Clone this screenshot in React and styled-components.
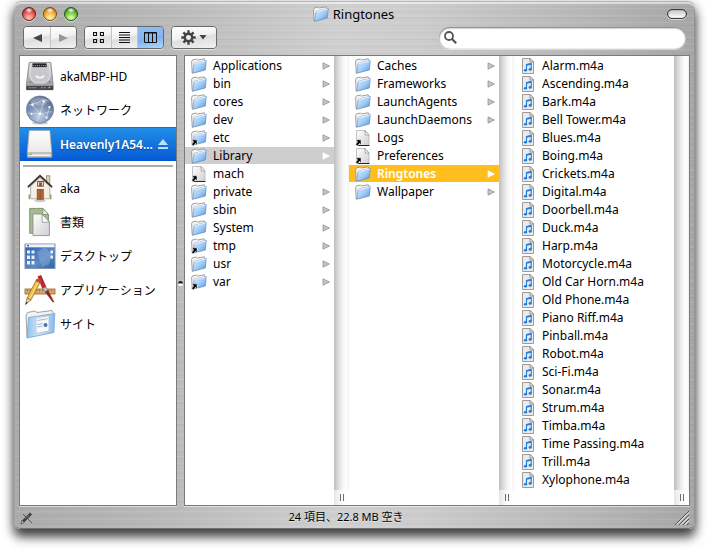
import React, { useState } from 'react';
import styled, { createGlobalStyle, css } from 'styled-components';

const GlobalStyle = createGlobalStyle`
  *{
    box-sizing: border-box;
  }
  body{
    margin: 0;
    background: #FFFFFF;
    color: #000000;
    font-family: "Noto Sans", "Noto Sans CJK JP", sans-serif;
    font-size: 12px;
    line-height: 16px;
  }
  ul{
    list-style: none;
    margin: 0;
    padding: 0;
  }
  button, input{
    font: inherit;
    color: inherit;
    margin: 0;
    padding: 0;
    border: none;
    background: none;
  }
  svg{
    display: block;
    flex: none;
  }
`

const Page = styled.div`
  padding: 1px 14px 24px;
  overflow: hidden;
`
const Window = styled.main`
  padding: 0 5px;
  border-radius: 7px 7px 6px 6px;
  background:
    repeating-linear-gradient(180deg, rgba(255,255,255,0.08) 0 1px, transparent 1px 3px, rgba(0,0,0,0.02) 3px 4px, transparent 4px 7px),
    repeating-linear-gradient(180deg, transparent 0 4px, rgba(255,255,255,0.08) 4px 5px, rgba(0,0,0,0.02) 5px 6px, transparent 6px 11px),
    linear-gradient(90deg, #ABABAB 0%, #B8B8B8 20%, #D0D0D0 48%, #CCCCCC 60%, #B6B6B6 85%, #A6A6A6 100%);
  box-shadow:
    inset 0 1px 0 #B4B4B4,
    inset 0 3px 1px rgba(255,255,255,0.6),
    inset 1px 0 0 #A2A2A2,
    inset -1px 0 0 #8C8C8C,
    inset 0 -1px 0 #707070,
    0 8px 11px rgba(0,0,0,0.7),
    0 2px 12px rgba(0,0,0,0.25);
`
const TitleBar = styled.header`
  display: grid;
  grid-template-columns: 1fr auto 1fr;
  align-items: center;
  height: 25px;
  padding: 0 3px;
`
const Lights = styled.div`
  display: flex;
  gap: 7px;
`
const Light = styled.button`
  width: 14px;
  height: 14px;
  border-radius: 50%;
  border: 1px solid ${props => props.$edge};
  background:
    radial-gradient(ellipse 4px 3px at 50% 18%, rgba(255,255,255,0.95), transparent),
    radial-gradient(circle at 50% 85%, ${props => props.$glow} 10%, ${props => props.$fill} 60%, ${props => props.$edge} 100%);
  box-shadow: 0 1px 0 rgba(255,255,255,0.6);
`
const Title = styled.h1`
  display: flex;
  align-items: center;
  gap: 4px;
  margin: 0;
  padding-right: 2px;
  font-size: 13px;
  font-weight: 400;
`
const Pill = styled.button`
  justify-self: end;
  width: 20px;
  height: 10px;
  border-radius: 5px;
  border: 1px solid #3A3A3A;
  background: linear-gradient(#C4C4C4, #FFFFFF);
  box-shadow: inset 0 0 1px #3A3A3A, 0 1px 0 rgba(255,255,255,0.6);
`
const Toolbar = styled.div`
  display: flex;
  align-items: center;
  gap: 7px;
  height: 29px;
  padding: 0 4px 6px;
`
const ButtonGroup = styled.div`
  display: flex;
  height: 23px;
  border: 1px solid #6A6A6A;
  border-radius: 4px;
  overflow: hidden;
  box-shadow: 0 1px 0 rgba(255,255,255,0.5);
`
const ToolButton = styled.button`
  display: flex;
  align-items: center;
  justify-content: center;
  gap: 3px;
  width: ${props => props.$wide ? '44px' : '26px'};
  background: linear-gradient(170deg, #FFFFFF 0%, #F2F2F2 45%, #DEDEDE 55%, #F2F2F2 100%);
  & + &{
    border-left: 1px solid #C4C4C4;
  }
  ${props => props.$active && css`
    background: linear-gradient(170deg, #8FBDF2 0%, #86B7F0 45%, #7CB0EE 55%, #B0DAFC 100%);
  `}
`
const Search = styled.label`
  display: flex;
  align-items: center;
  gap: 4px;
  flex: 0 1 247px;
  height: 22px;
  margin-left: auto;
  padding: 0 8px 0 5px;
  border-radius: 11px;
  background: #FFFFFF;
  box-shadow: inset 0 1px 2px #6E6E6E, inset 0 0 1px #909090, 0 1px 0 rgba(255,255,255,0.4);
`
const SearchInput = styled.input`
  flex: 1;
  min-width: 0;
  outline: none;
`
const Body = styled.div`
  display: flex;
  gap: 7px;
  position: relative;
`
const Pane = styled.div`
  border: 1px solid #7A7A7A;
  background: #FFFFFF;
  box-shadow: 0 1px 0 rgba(255,255,255,0.5);
`
const Sidebar = styled(Pane).attrs({ as: 'nav' })`
  flex: none;
  width: 158px;
  padding-top: 3px;
`
const Place = styled.button`
  display: flex;
  align-items: center;
  gap: 4px;
  width: 100%;
  height: 34px;
  padding: 0 8px 0 4px;
  text-align: left;
  white-space: nowrap;
  ${props => props.$active && css`
    color: #FFFFFF;
    font-weight: 600;
    background: linear-gradient(#2390E8, #0459D2);
    box-shadow: inset 0 1px 0 #1474CC;
    text-shadow: 0 1px 1px rgba(0,0,0,0.4);
  `}
`
const PlaceIcon = styled.span`
  display: flex;
  justify-content: center;
  flex: none;
  width: 32px;
`
const PlaceName = styled.span`
  flex: 1;
  min-width: 0;
  padding-top: 2px;
`
const Divider = styled.hr`
  height: 2px;
  margin: 4px 3px;
  border: none;
  background: #ABABAB;
`
const Splitter = styled.span`
  position: absolute;
  left: 159px;
  top: 50%;
  width: 5px;
  height: 5px;
  border-radius: 50%;
  background: linear-gradient(#222222 40%, #FFFFFF 60%);
`
const Columns = styled(Pane)`
  display: flex;
  flex: 1;
  min-width: 0;
`
const Column = styled.section`
  display: flex;
  flex: ${props => props.$grow} 1 0;
  min-width: 0;
`
const FileList = styled.ul`
  flex: 1;
  min-width: 0;
  && {
    padding: 1px 0 16px;
  }
`
const FileItem = styled.li`
  height: 17px;
  margin-bottom: 1px;
`
const FileButton = styled.button`
  display: flex;
  align-items: center;
  gap: 6px;
  width: 100%;
  height: 17px;
  padding: 0 4px 0 6px;
  text-align: left;
  white-space: nowrap;
  ${props => props.$state === 'path' && css`
    background: #CECECE;
  `}
  ${props => props.$state === 'current' && css`
    background: #FFBE1E;
    color: #FFFFFF;
    font-weight: 600;
  `}
`
const FileName = styled.span`
  flex: 1;
  min-width: 0;
`
const Track = styled.div`
  display: flex;
  flex-direction: column;
  flex: none;
  width: 15px;
  background: linear-gradient(90deg, #BEBEBE, #E2E2E2 35%, #F6F6F6 60%, #FFFFFF 85%, #F0F0F0);
`
const Grip = styled.div`
  display: flex;
  align-items: center;
  justify-content: center;
  gap: 2px;
  height: 15px;
  margin-top: auto;
  background: linear-gradient(90deg, #E6E6E6, #FAFAFA 50%, #FFFFFF);
  &::before, &::after{
    content: '';
    width: 1px;
    height: 7px;
    background: #6E6E6E;
  }
`
const StatusBar = styled.footer`
  display: flex;
  align-items: center;
  height: 23px;
`
const Status = styled.p`
  flex: 1;
  margin: 0;
  padding: 0 16px 2px 0;
  text-align: center;
  font-size: 11px;
  text-shadow: 0 1px 0 rgba(255,255,255,0.5);
`

const Gradients = () => (
  <svg width="0" height="0" aria-hidden="true">
    <defs>
      <linearGradient id="folder" x1="0" y1="0" x2="1" y2="1">
        <stop offset="0" stopColor="#DCEFFF" />
        <stop offset="0.5" stopColor="#A4CEF8" />
        <stop offset="1" stopColor="#4F90E4" />
      </linearGradient>
      <linearGradient id="site" x1="0" y1="0" x2="1" y2="0">
        <stop offset="0" stopColor="#8FC0EC" />
        <stop offset="0.4" stopColor="#CDE6FA" />
        <stop offset="1" stopColor="#86BDF2" />
      </linearGradient>
      <linearGradient id="paper" x1="0" y1="0" x2="1" y2="1">
        <stop offset="0" stopColor="#FFFFFF" />
        <stop offset="1" stopColor="#CFCFCF" />
      </linearGradient>
      <linearGradient id="steel" x1="0" y1="0" x2="0" y2="1">
        <stop offset="0" stopColor="#D8D8DC" />
        <stop offset="1" stopColor="#98989E" />
      </linearGradient>
      <linearGradient id="white" x1="0" y1="0" x2="0" y2="1">
        <stop offset="0" stopColor="#FFFFFF" />
        <stop offset="1" stopColor="#E4E4E4" />
      </linearGradient>
      <radialGradient id="globe" cx="0.45" cy="0.75" r="0.75">
        <stop offset="0" stopColor="#C3D2E8" />
        <stop offset="0.5" stopColor="#8396B8" />
        <stop offset="1" stopColor="#56658A" />
      </radialGradient>
      <linearGradient id="desk" x1="0" y1="0" x2="1" y2="1">
        <stop offset="0" stopColor="#2C5FA8" />
        <stop offset="0.6" stopColor="#5B8AC4" />
        <stop offset="1" stopColor="#2E61AA" />
      </linearGradient>
    </defs>
  </svg>
)

const AliasArrow = () => (
  <path d="M1 9.8h5v5l-1.500-1.500-1.900 2.500-2-1.500 2.100-2.300z" fill="#000" stroke="#fff" strokeWidth="0.5" />
)

const FolderIcon = ({ alias }) => (
  <svg width="16" height="16" viewBox="0 0 16 16" aria-hidden="true">
    <path d="M1.2 15L0.6 3.6L1.6 1.8L5.4 1.1L6.4 2L13.2 0.8L14 2.4L14 11.5Z" fill="#F4F4F4" stroke="#8A8A8A" strokeWidth="0.8" />
    <path d="M3.2 5.3L15.3 2.4L14.3 12L1.6 15.3Z" fill="url(#folder)" stroke="#6288B8" strokeWidth="0.6" />
    <path d="M3.4 5.7L14.8 3" stroke="#fff" strokeWidth="0.8" />
    {alias && <AliasArrow />}
  </svg>
)

const DocumentIcon = () => (
  <svg width="16" height="16" viewBox="0 0 16 16" aria-hidden="true">
    <path d="M1.5 0.5h8.5l4 4.5v10.5H1.5z" fill="url(#paper)" stroke="#B4B4B4" strokeWidth="0.8" />
    <path d="M3 15.5h11.4" stroke="#222" strokeWidth="1" />
    <path d="M10 0.5l0.3 4.6 3.7-0.1z" fill="#fff" stroke="#888" strokeWidth="0.7" />
    <AliasArrow />
  </svg>
)

const MusicIcon = () => (
  <svg width="16" height="16" viewBox="0 0 16 16" aria-hidden="true">
    <path d="M2.5 0.5h7.5l3.5 3.5v11.5h-11z" fill="#EAEAEA" stroke="#9C9C9C" />
    <path d="M10 0.5v3.5h3.5z" fill="#fff" stroke="#777" strokeWidth="0.8" />
    <path d="M6.5 12V6.8l4.7-1V11" fill="none" stroke="#1F7BE0" strokeWidth="1.1" />
    <path d="M6.500 6l4.700-1v1.800l-4.700 1z" fill="#1F7BE0" />
    <ellipse cx="5.500" cy="12.300" rx="1.600" ry="1.300" fill="#1F7BE0" />
    <ellipse cx="10.200" cy="11.400" rx="1.600" ry="1.300" fill="#1F7BE0" />
  </svg>
)

const DiskIcon = () => (
  <svg width="30" height="30" viewBox="0 0 32 32" aria-hidden="true">
    <path d="M4.500 1.500h23l2.500 23.500v5.500H1.500v-5.500z" fill="url(#steel)" stroke="#77777C" strokeWidth="0.8" />
    <path d="M6.500 3h19l1.500 11c-0.500 5-3 8.500-7 9.500h-8c-4-1-6.500-4.500-7-9.500z" fill="#C8C8CD" stroke="#F2F2F2" strokeWidth="0.8" />
    <rect x="8" y="2.500" width="15" height="4" fill="#222" />
    <path d="M9 5h13" stroke="#C4C4C4" strokeDasharray="1 1" />
    <path d="M12 15.500c1 3 7 3 8 0" fill="none" stroke="#fff" strokeWidth="1.500" />
    <circle cx="5.500" cy="22.500" r="1" fill="#777" />
    <circle cx="26.500" cy="22.500" r="1" fill="#777" />
    <rect x="1.500" y="26.500" width="28.500" height="4.500" fill="#48484C" />
    <path d="M4 28.500h8M17 28.500h5" stroke="#A0A0A0" strokeDasharray="2 1" />
    <rect x="25" y="27.500" width="2" height="1.500" fill="#D5A93A" />
  </svg>
)

const NetworkIcon = () => (
  <svg width="30" height="32" viewBox="0 0 32 32" aria-hidden="true">
    <ellipse cx="16" cy="30" rx="9" ry="1.600" fill="#CFCFCF" />
    <circle cx="16" cy="15.500" r="14.500" fill="url(#globe)" stroke="#6E7D9C" strokeWidth="0.8" />
    <path d="M4 11c5-3 9-1 12-4s7-2 10 0M3 19c5 2 8 0 13 1s8-3 13-2M8 11l8 9 4-13M16 20l-3 8M16 20l7 4 3-11" fill="none" stroke="#DCE6F4" strokeWidth="0.6" />
    <g fill="#fff">
      <circle cx="8" cy="10.500" r="1.400" />
      <circle cx="20" cy="7" r="1.300" />
      <circle cx="16" cy="20" r="1.400" />
      <circle cx="26" cy="13" r="1.200" />
      <circle cx="23" cy="24" r="1.200" />
      <circle cx="7" cy="20" r="1" />
    </g>
    <ellipse cx="15" cy="7" rx="9" ry="4.500" fill="#fff" opacity="0.25" />
  </svg>
)

const DriveIcon = () => (
  <svg width="30" height="32" viewBox="0 0 32 32" aria-hidden="true">
    <path d="M4.500 1.500h22l2 23v5.500h-26v-5.500z" fill="url(#white)" stroke="#A8A8A8" strokeWidth="0.8" />
    <path d="M2.500 25.500h26v4.500h-26z" fill="#D2D2D2" stroke="#888" strokeWidth="0.7" />
    <path d="M5 28h22" stroke="#F4F4F4" strokeWidth="1.500" />
    <path d="M5 27h2" stroke="#4D9A3A" />
  </svg>
)

const HomeIcon = () => (
  <svg width="30" height="32" viewBox="0 0 32 32" aria-hidden="true">
    <ellipse cx="16" cy="29.500" rx="6" ry="1.800" fill="#C9C9C9" />
    <rect x="23" y="3" width="3.500" height="10" fill="#DDD6C6" stroke="#88755E" strokeWidth="0.8" />
    <path d="M6 14L16 5l10.500 9v13.500H6z" fill="#F4EFE4" stroke="#A29A8A" strokeWidth="0.8" />
    <path d="M3 15L16 3l13 12" fill="none" stroke="#3A3330" strokeWidth="1.900" />
    <rect x="13.500" y="9" width="6" height="5" fill="#fff" stroke="#7A3A20" />
    <rect x="15" y="10" width="3" height="4" fill="#B33A22" />
    <rect x="13" y="17.500" width="6.500" height="10.500" fill="#B06A34" stroke="#7A4522" strokeWidth="0.8" />
    <path d="M16.200 18v9.500" stroke="#8A5028" />
    <path d="M4.500 23v5M27.500 23v5" stroke="#6D9A49" strokeWidth="1.300" />
  </svg>
)

const PapersIcon = () => (
  <svg width="30" height="32" viewBox="0 0 32 32" aria-hidden="true">
    <path d="M5 1.500h14l6 6.500V28H5z" fill="#A5BC92" stroke="#73895F" strokeWidth="0.9" />
    <path d="M19 1.500v6.500h6z" fill="#E8F0E0" stroke="#73895F" strokeWidth="0.8" />
    <path d="M8.500 7.500h9.500l8 8.500V30.500H8.500z" fill="url(#paper)" stroke="#8A8A8A" strokeWidth="0.9" />
    <path d="M18 7.500l0.500 9 7.500-0.500z" fill="#fff" stroke="#8A8A8A" strokeWidth="0.8" />
  </svg>
)

const DesktopIcon = () => (
  <svg width="32" height="32" viewBox="0 0 32 32" aria-hidden="true">
    <rect x="1" y="4" width="30" height="24.500" fill="url(#desk)" stroke="#7E93B5" />
    <path d="M13 12l8-5 7 8-3 9-7 3z" fill="#8FB0D6" opacity="0.45" />
    <rect x="1.500" y="4.300" width="29" height="3" fill="#F2F4F8" />
    <path d="M3 5h2v1.500H3z" fill="#2D6EC8" />
    <g fill="#E8F0FA">
      <rect x="3" y="10.500" width="3" height="3" />
      <rect x="7.500" y="10.500" width="3" height="3" />
      <rect x="3" y="15.500" width="3" height="3.500" />
      <rect x="7.500" y="15.500" width="3" height="3.500" />
      <rect x="3" y="21" width="3" height="3.500" />
      <rect x="7.500" y="21" width="3" height="3.500" />
      <rect x="26.500" y="10.500" width="2.500" height="3" />
      <rect x="26.500" y="15.500" width="2.500" height="3" />
    </g>
  </svg>
)

const ApplicationsIcon = () => (
  <svg width="32" height="32" viewBox="0 0 32 32" aria-hidden="true">
    <rect x="1" y="15" width="30" height="5" fill="#D9A468" stroke="#96652F" strokeWidth="0.8" />
    <path d="M3 16.500h26" stroke="#8A5A28" strokeDasharray="1 2" />
    <path d="M14 2.500l3-1 5 11.500-3.500 1.500z" fill="#C8262A" stroke="#7C1418" strokeWidth="0.6" />
    <path d="M18.500 14.500l3.500-1.500 2 3-3 2z" fill="#B9B9B9" stroke="#777" strokeWidth="0.5" />
    <path d="M21 18l3-2 6.500 12.500-2-0.500z" fill="#8C2A22" />
    <path d="M12.500 5.500l4 2L7 26l-4-2z" fill="#F3BE3C" stroke="#9A6A20" strokeWidth="0.7" />
    <path d="M15 6.500L5.500 25" stroke="#FCE29A" />
    <path d="M12.500 5.500c1-2 4.500-1 4 2l-1 1.500-4-2z" fill="#D0433A" />
    <path d="M3 24l4 2-5.500 4.500z" fill="#EAD0A4" stroke="#70512C" strokeWidth="0.6" />
    <path d="M1.500 30.500l0.600-2.500 1.600 0.800z" fill="#222" />
  </svg>
)

const SitesIcon = () => (
  <svg width="32" height="32" viewBox="0 0 32 32" aria-hidden="true">
    <path d="M3 29L2 8l1.500-3.500 7.500-1.500 2 1.500L28 2.500l1.500 3v18z" fill="#F3F3F3" stroke="#999" strokeWidth="0.9" />
    <path d="M4.500 9.500L30.800 5.500l-1 19L3 30z" fill="url(#site)" stroke="#7AA2CE" strokeWidth="0.8" />
    <path d="M12 10l13-2.300v15.300l-13 2.500z" fill="#F6F9FC" stroke="#B4C4D4" strokeWidth="0.8" />
    <path d="M13.500 12.500l10-1.800M13.500 16.500l5-0.900M13.500 19l5-0.900" stroke="#A9B6C2" />
    <circle cx="21.500" cy="17" r="2" fill="#4279A8" />
  </svg>
)

const BackIcon = () => (
  <svg width="9" height="8" viewBox="0 0 9 8" aria-hidden="true"><path d="M9 0v8L0 4z" fill="#444" /></svg>
)

const ForwardIcon = () => (
  <svg width="9" height="8" viewBox="0 0 9 8" aria-hidden="true"><path d="M0 0v8l9-4z" fill="#999" /></svg>
)

const GridIcon = () => (
  <svg width="11" height="11" viewBox="0 0 11 11" fill="none" stroke="#111" aria-hidden="true">
    <path d="M0.500 0.500h3v3h-3zM7.500 0.500h3v3h-3zM0.500 7.500h3v3h-3zM7.500 7.500h3v3h-3z" strokeWidth="1.200" />
  </svg>
)

const ListIcon = () => (
  <svg width="11" height="11" viewBox="0 0 11 11" stroke="#111" aria-hidden="true">
    <path d="M0 0.500h11M0 3h11M0 5.500h11M0 8h11M0 10.500h11" />
  </svg>
)

const ColumnIcon = () => (
  <svg width="13" height="11" viewBox="0 0 13 11" fill="none" stroke="#111" aria-hidden="true">
    <path d="M0.500 0.500h12v10H0.500zM4.500 0.500v10M8.500 0.500v10" />
    <path d="M0 1h13" strokeWidth="1" />
  </svg>
)

const GearIcon = () => (
  <svg width="15" height="15" viewBox="0 0 15 15" aria-hidden="true">
    <g stroke="#444" strokeWidth="2.400">
      <path d="M7.500 0.300v3M7.500 11.700v3M0.300 7.500h3M11.700 7.500h3M2.400 2.400l2.200 2.200M10.400 10.400l2.200 2.200M12.600 2.400l-2.200 2.200M4.600 10.400l-2.200 2.200" />
    </g>
    <circle cx="7.500" cy="7.500" r="3.700" fill="none" stroke="#444" strokeWidth="2.400" />
  </svg>
)

const DropIcon = () => (
  <svg width="8" height="5" viewBox="0 0 8 5" aria-hidden="true"><path d="M0.500 0h7L4 4.500z" fill="#444" /></svg>
)

const SearchIcon = () => (
  <svg width="13" height="13" viewBox="0 0 13 13" fill="none" stroke="#555" aria-hidden="true">
    <circle cx="5" cy="5" r="4" strokeWidth="1.800" />
    <path d="M8 8l4.200 4.200" strokeWidth="2.200" />
  </svg>
)

const EjectIcon = () => (
  <svg width="10" height="10" viewBox="0 0 10 10" fill="#BFE0FC" aria-hidden="true">
    <path d="M5 0l5 6H0zM0 8h10v2H0z" />
  </svg>
)

const ArrowIcon = ({ active }) => (
  <svg width="8" height="8" viewBox="0 0 8 8" aria-hidden="true">
    <path d="M1 0.800v6.400L7.500 4z" fill={active ? '#fff' : '#C4C4C4'} stroke={active ? '#fff' : '#8C8C8C'} strokeWidth="0.7" />
  </svg>
)

const PencilIcon = () => (
  <svg width="15" height="14" viewBox="0 0 15 14" aria-hidden="true">
    <path d="M4 3l9 9" stroke="#555" strokeWidth="1" />
    <path d="M4 10.500L12 2.500" stroke="#3C3C3C" strokeWidth="2.600" />
    <path d="M3 9.500l2 2L2 13z" fill="#eee" stroke="#333" strokeWidth="0.7" />
    <path d="M6 8l4-4" stroke="#999" strokeWidth="0.7" />
  </svg>
)

const ResizeIcon = () => (
  <svg width="16" height="16" viewBox="0 0 16 16" aria-hidden="true">
    <path d="M1 15L15 1M5 15L15 5M9 15l6-6M13 15l2-2" stroke="#555" />
    <path d="M2.500 15L15 2.500M6.500 15L15 6.500M10.500 15l4.500-4.500" stroke="#F4F4F4" />
  </svg>
)

const devices = [
  { name: 'akaMBP-HD', Icon: DiskIcon },
  { name: 'ネットワーク', Icon: NetworkIcon },
  { name: 'Heavenly1A54...', Icon: DriveIcon, eject: true },
]

const places = [
  { name: 'aka', Icon: HomeIcon },
  { name: '書類', Icon: PapersIcon },
  { name: 'デスクトップ', Icon: DesktopIcon },
  { name: 'アプリケーション', Icon: ApplicationsIcon },
  { name: 'サイト', Icon: SitesIcon },
]

const rootFiles = [
  { name: 'Applications', kind: 'folder' },
  { name: 'bin', kind: 'folder' },
  { name: 'cores', kind: 'folder' },
  { name: 'dev', kind: 'folder' },
  { name: 'etc', kind: 'alias' },
  { name: 'Library', kind: 'folder', state: 'path' },
  { name: 'mach', kind: 'document' },
  { name: 'private', kind: 'folder' },
  { name: 'sbin', kind: 'folder' },
  { name: 'System', kind: 'folder' },
  { name: 'tmp', kind: 'alias' },
  { name: 'usr', kind: 'folder' },
  { name: 'var', kind: 'alias' },
]

const libraryFiles = [
  { name: 'Caches', kind: 'folder' },
  { name: 'Frameworks', kind: 'folder' },
  { name: 'LaunchAgents', kind: 'folder' },
  { name: 'LaunchDaemons', kind: 'folder' },
  { name: 'Logs', kind: 'document' },
  { name: 'Preferences', kind: 'document' },
  { name: 'Ringtones', kind: 'folder', state: 'current' },
  { name: 'Wallpaper', kind: 'folder' },
]

const ringtones = [
  'Alarm', 'Ascending', 'Bark', 'Bell Tower', 'Blues', 'Boing', 'Crickets', 'Digital',
  'Doorbell', 'Duck', 'Harp', 'Motorcycle', 'Old Car Horn', 'Old Phone', 'Piano Riff', 'Pinball',
  'Robot', 'Sci-Fi', 'Sonar', 'Strum', 'Timba', 'Time Passing', 'Trill', 'Xylophone',
].map(name => ({ name: `${name}.m4a`, kind: 'music' }))

function FileIcon({ kind }) {
  if (kind === 'music') return <MusicIcon />
  if (kind === 'document') return <DocumentIcon />
  return <FolderIcon alias={kind === 'alias'} />
}

function FileColumn({ label, files, grow }) {
  return (
    <Column $grow={grow} aria-label={label}>
      <FileList>
        {files.map(file => (
          <FileItem key={file.name}>
            <FileButton type="button" $state={file.state}>
              <FileIcon kind={file.kind} />
              <FileName>{file.name}</FileName>
              {(file.kind === 'folder' || file.kind === 'alias') && <ArrowIcon active={Boolean(file.state)} />}
            </FileButton>
          </FileItem>
        ))}
      </FileList>
      <Track>
        <Grip />
      </Track>
    </Column>
  )
}

function PlaceList({ items, active, onSelect }) {
  return (
    <ul>
      {items.map(({ name, Icon, eject }) => (
        <li key={name}>
          <Place type="button" $active={active === name} onClick={() => onSelect(name)}>
            <PlaceIcon><Icon /></PlaceIcon>
            <PlaceName>{name}</PlaceName>
            {eject && <EjectIcon />}
          </Place>
        </li>
      ))}
    </ul>
  )
}

function App() {
  const [place, setPlace] = useState('Heavenly1A54...');
  const [query, setQuery] = useState('');

  return (
    <>
      <GlobalStyle/>
      <Gradients/>
      <Page>
        <Window>
          <TitleBar>
            <Lights>
              <Light type="button" aria-label="Close" $fill="#DE4A42" $glow="#FFB4A8" $edge="#6E1814" />
              <Light type="button" aria-label="Minimize" $fill="#F2A22C" $glow="#FFF0A0" $edge="#7C4A10" />
              <Light type="button" aria-label="Zoom" $fill="#5DB52C" $glow="#D4FF9C" $edge="#22520E" />
            </Lights>
            <Title><FolderIcon/>Ringtones</Title>
            <Pill type="button" aria-label="Toolbar" />
          </TitleBar>
          <Toolbar>
            <ButtonGroup>
              <ToolButton type="button" aria-label="Back"><BackIcon/></ToolButton>
              <ToolButton type="button" aria-label="Forward"><ForwardIcon/></ToolButton>
            </ButtonGroup>
            <ButtonGroup>
              <ToolButton type="button" aria-label="Icons"><GridIcon/></ToolButton>
              <ToolButton type="button" aria-label="List"><ListIcon/></ToolButton>
              <ToolButton type="button" aria-label="Columns" $active><ColumnIcon/></ToolButton>
            </ButtonGroup>
            <ButtonGroup>
              <ToolButton type="button" aria-label="Action" $wide><GearIcon/><DropIcon/></ToolButton>
            </ButtonGroup>
            <Search>
              <SearchIcon/>
              <SearchInput type="text" aria-label="Search" value={query} onChange={e => setQuery(e.target.value)} />
            </Search>
          </Toolbar>
          <Body>
            <Sidebar>
              <PlaceList items={devices} active={place} onSelect={setPlace} />
              <Divider/>
              <PlaceList items={places} active={place} onSelect={setPlace} />
            </Sidebar>
            <Splitter/>
            <Columns>
              <FileColumn label="Heavenly1A54" files={rootFiles} grow={164} />
              <FileColumn label="Library" files={libraryFiles} grow={165} />
              <FileColumn label="Ringtones" files={ringtones} grow={175} />
            </Columns>
          </Body>
          <StatusBar>
            <PencilIcon/>
            <Status>24 項目、22.8 MB 空き</Status>
            <ResizeIcon/>
          </StatusBar>
        </Window>
      </Page>
    </>
  );
}

export default App;
